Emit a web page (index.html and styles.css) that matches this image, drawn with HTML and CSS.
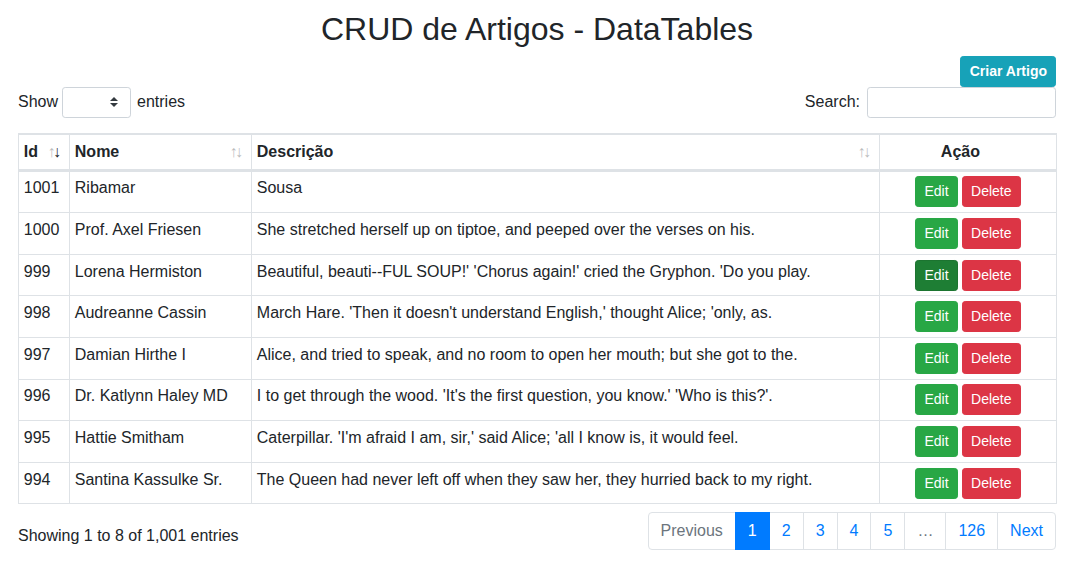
FILE: index.html
```html
<!DOCTYPE html>
<html lang="pt-BR">
<head>
<meta charset="utf-8">
<title>CRUD de Artigos - DataTables</title>
<link rel="stylesheet" href="styles.css">
</head>
<body>
<div class="page">
  <h1 class="title">CRUD de Artigos - DataTables</h1>
  <div class="toolbar">
    <button class="btn btn-sm btn-info">Criar Artigo</button>
  </div>
  <div class="dt-controls">
    <label class="dt-length"><span>Show</span><span class="select-box"><svg class="caret" width="8" height="10" viewBox="0 0 4 5"><path fill="#343a40" d="M2 0L0 2h4zm0 5L0 3h4z"/></svg></span><span class="entries">entries</span></label>
    <label class="dt-filter"><span>Search:</span><input type="search" class="search-input"></label>
  </div>
  <table class="dt-table">
    <colgroup>
      <col class="c-id"><col class="c-nome"><col class="c-desc"><col class="c-acao">
    </colgroup>
    <thead>
      <tr>
        <th class="sorting sorting-desc">Id</th>
        <th class="sorting">Nome</th>
        <th class="sorting">Descrição</th>
        <th class="th-acao">Ação</th>
      </tr>
    </thead>
    <tbody>
      <tr><td>1001</td><td>Ribamar</td><td>Sousa</td><td class="acao"><button class="btn btn-sm btn-success">Edit</button> <button class="btn btn-sm btn-danger">Delete</button></td></tr>
      <tr><td>1000</td><td>Prof. Axel Friesen</td><td>She stretched herself up on tiptoe, and peeped over the verses on his.</td><td class="acao"><button class="btn btn-sm btn-success">Edit</button> <button class="btn btn-sm btn-danger">Delete</button></td></tr>
      <tr><td>999</td><td>Lorena Hermiston</td><td>Beautiful, beauti--FUL SOUP!' 'Chorus again!' cried the Gryphon. 'Do you play.</td><td class="acao"><button class="btn btn-sm btn-success is-active">Edit</button> <button class="btn btn-sm btn-danger">Delete</button></td></tr>
      <tr><td>998</td><td>Audreanne Cassin</td><td>March Hare. 'Then it doesn't understand English,' thought Alice; 'only, as.</td><td class="acao"><button class="btn btn-sm btn-success">Edit</button> <button class="btn btn-sm btn-danger">Delete</button></td></tr>
      <tr><td>997</td><td>Damian Hirthe I</td><td>Alice, and tried to speak, and no room to open her mouth; but she got to the.</td><td class="acao"><button class="btn btn-sm btn-success">Edit</button> <button class="btn btn-sm btn-danger">Delete</button></td></tr>
      <tr><td>996</td><td>Dr. Katlynn Haley MD</td><td>I to get through the wood. 'It's the first question, you know.' 'Who is this?'.</td><td class="acao"><button class="btn btn-sm btn-success">Edit</button> <button class="btn btn-sm btn-danger">Delete</button></td></tr>
      <tr><td>995</td><td>Hattie Smitham</td><td>Caterpillar. 'I'm afraid I am, sir,' said Alice; 'all I know is, it would feel.</td><td class="acao"><button class="btn btn-sm btn-success">Edit</button> <button class="btn btn-sm btn-danger">Delete</button></td></tr>
      <tr><td>994</td><td>Santina Kassulke Sr.</td><td>The Queen had never left off when they saw her, they hurried back to my right.</td><td class="acao"><button class="btn btn-sm btn-success">Edit</button> <button class="btn btn-sm btn-danger">Delete</button></td></tr>
    </tbody>
  </table>
  <div class="dt-footer">
    <div class="dt-info">Showing 1 to 8 of 1,001 entries</div>
    <ul class="pagination">
      <li class="page-item disabled"><a class="page-link">Previous</a></li>
      <li class="page-item active"><a class="page-link">1</a></li>
      <li class="page-item"><a class="page-link">2</a></li>
      <li class="page-item"><a class="page-link">3</a></li>
      <li class="page-item"><a class="page-link">4</a></li>
      <li class="page-item"><a class="page-link">5</a></li>
      <li class="page-item disabled"><a class="page-link">…</a></li>
      <li class="page-item"><a class="page-link">126</a></li>
      <li class="page-item"><a class="page-link">Next</a></li>
    </ul>
  </div>
</div>
</body>
</html>
```

FILE: styles.css
```css
* { box-sizing: border-box; }
html, body { margin: 0; padding: 0; }
body {
  font-family: "Liberation Sans", Arial, sans-serif;
  font-size: 16px;
  line-height: 1.5;
  color: #212529;
  background: #fff;
}
.page { padding: 10px 17px 0 18px; }
.title {
  margin: 0 0 7.6px;
  font-size: 32px;
  font-weight: 500;
  line-height: 1.2;
  text-align: center;
}
.toolbar { display: flex; justify-content: flex-end; }

.btn {
  display: inline-block;
  font-family: inherit;
  font-weight: 400;
  color: #fff;
  border: 1px solid transparent;
  cursor: pointer;
  vertical-align: middle;
}
.btn-sm { padding: 4px 8px; font-size: 14px; line-height: 1.5; border-radius: 3.2px; }
.btn-info { background: #17a2b8; border-color: #17a2b8; font-weight: 700; padding-left: 9px; }
.btn-success { background: #28a745; border-color: #28a745; }
.btn-success.is-active { background: #1e7e34; border-color: #1c7430; }
.btn-danger { background: #dc3545; border-color: #dc3545; }

.dt-controls {
  display: flex;
  justify-content: space-between;
  align-items: center;
  height: 31px;
}
.dt-length, .dt-filter { display: flex; align-items: center; }
.select-box {
  display: flex;
  justify-content: flex-end;
  align-items: center;
  width: 69px;
  height: 31px;
  margin-left: 4px;
  padding-right: 12px;
  border: 1px solid #ced4da;
  border-radius: 3.2px;
  background: #fff;
}
.entries { margin-left: 6px; }
.search-input {
  width: 189px;
  height: 31px;
  margin-left: 7px;
  padding: 4px 8px;
  font-family: inherit;
  font-size: 14px;
  border: 1px solid #ced4da;
  border-radius: 3.2px;
  background: #fff;
  outline: none;
}

.dt-table {
  width: 100%;
  margin-top: 15px;
  border-collapse: separate;
  border-spacing: 0;
  table-layout: fixed;
  border: 1px solid #dee2e6;
  border-right-width: 0;
}
.c-id { width: 51px; }
.c-nome { width: 182px; }
.c-desc { width: 628px; }
.c-acao { width: 177px; }
.dt-table th, .dt-table td {
  padding: 4.8px;
  border: 1px solid #dee2e6;
  border-left-width: 0;
  vertical-align: top;
  text-align: left;
  white-space: nowrap;
  overflow: hidden;
}
.dt-table tbody td { border-bottom-width: 0; }
.dt-table thead th {
  font-weight: 700;
  border-bottom-width: 2px;
  position: relative;
}
.dt-table th.th-acao { text-align: center; padding-right: 20px; }
.sorting::before, .sorting::after {
  position: absolute;
  top: 5px;
  display: block;
  opacity: 0.3;
  font-weight: 400;
}
.sorting::before { content: "\2191"; right: 13.6px; }
.sorting::after { content: "\2193"; right: 8px; }
.sorting-desc::after { opacity: 1; }
.dt-table td.acao { text-align: center; }

.dt-footer {
  display: flex;
  justify-content: space-between;
  align-items: flex-start;
  margin-top: 6px;
}
.dt-info { padding-top: 13.6px; white-space: nowrap; }
.pagination {
  display: flex;
  list-style: none;
  margin: 2px 0 0;
  padding: 0;
}
.page-link {
  display: block;
  padding: 8px 12px;
  margin-left: -1px;
  line-height: 1.25;
  color: #007bff;
  background: #fff;
  border: 1px solid #dee2e6;
  text-decoration: none;
}
.page-item:first-child .page-link { margin-left: 0; border-radius: 4px 0 0 4px; }
.page-item:last-child .page-link { border-radius: 0 4px 4px 0; }
.page-item.active .page-link { background: #007bff; border-color: #007bff; color: #fff; position: relative; }
.page-item.disabled .page-link { color: #6c757d; }
```
